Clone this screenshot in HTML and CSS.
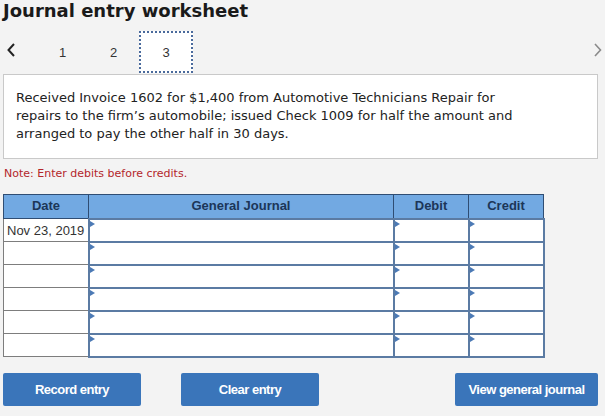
FILE: index.html
```html
<!DOCTYPE html>
<html lang="en">
<head>
    <meta charset="UTF-8">
    <meta name="viewport" content="width=device-width, initial-scale=1.0">
    <title>Journal entry worksheet</title>
    <link rel="stylesheet" href="styles.css">
</head>
<body>
    <h1 class="title">Journal entry worksheet</h1>

    <div class="pager">
        <a href="#" class="pager-arrow prev">
            <svg width="8" height="14" viewBox="0 0 8 14"><path d="M7 1 L1.5 7 L7 13" fill="none" stroke="#222" stroke-width="2"/></svg>
        </a>
        <a href="#" class="pager-tab">1</a>
        <a href="#" class="pager-tab">2</a>
        <a href="#" class="pager-tab active">3</a>
        <span class="pager-spacer"></span>
        <a href="#" class="pager-arrow next">
            <svg width="8" height="14" viewBox="0 0 8 14"><path d="M1 1 L6.5 7 L1 13" fill="none" stroke="#8a8a8a" stroke-width="1.6"/></svg>
        </a>
    </div>

    <div class="question">
        Received Invoice 1602 for $1,400 from Automotive Technicians Repair for<br>
        repairs to the firm’s automobile; issued Check 1009 for half the amount and<br>
        arranged to pay the other half in 30 days.
    </div>

    <div class="note">Note: Enter debits before credits.</div>

    <table class="journal">
        <thead>
            <tr>
                <th class="col-date">Date</th>
                <th class="col-account">General Journal</th>
                <th class="col-amount">Debit</th>
                <th class="col-amount">Credit</th>
            </tr>
        </thead>
        <tbody>
            <tr>
                <td class="date">Nov 23, 2019</td>
                <td class="entry"></td>
                <td class="entry"></td>
                <td class="entry"></td>
            </tr>
            <tr>
                <td class="date"></td>
                <td class="entry"></td>
                <td class="entry"></td>
                <td class="entry"></td>
            </tr>
            <tr>
                <td class="date"></td>
                <td class="entry"></td>
                <td class="entry"></td>
                <td class="entry"></td>
            </tr>
            <tr>
                <td class="date"></td>
                <td class="entry"></td>
                <td class="entry"></td>
                <td class="entry"></td>
            </tr>
            <tr>
                <td class="date"></td>
                <td class="entry"></td>
                <td class="entry"></td>
                <td class="entry"></td>
            </tr>
            <tr>
                <td class="date"></td>
                <td class="entry"></td>
                <td class="entry"></td>
                <td class="entry"></td>
            </tr>
        </tbody>
    </table>

    <div class="actions">
        <button class="btn">Record entry</button>
        <button class="btn">Clear entry</button>
        <span class="actions-spacer"></span>
        <button class="btn btn-wide">View general journal</button>
    </div>
</body>
</html>
```

FILE: styles.css
```css
* {
    margin: 0;
    padding: 0;
    box-sizing: border-box;
}

body {
    font-family: "DejaVu Sans", Verdana, sans-serif;
    background: #f3f3f3;
    color: #222;
    padding: 0 7px 0 3px;
}

.title {
    font-size: 18px;
    font-weight: bold;
    line-height: 21px;
    color: #1a1a1a;
}

.pager {
    display: flex;
    align-items: center;
    height: 42px;
    margin-top: 10px;
}

.pager-arrow {
    display: flex;
    align-items: center;
    justify-content: center;
}

.pager-arrow.prev {
    width: 14px;
    margin-left: 1px;
    margin-right: 19px;
    margin-top: -4px;
}

.pager-arrow.next {
    width: 10px;
    margin-right: -5px;
    margin-top: -4px;
}

.pager-tab {
    width: 51px;
    height: 42px;
    display: flex;
    align-items: center;
    justify-content: center;
    font-family: "Liberation Sans", Arial, sans-serif;
    font-size: 13px;
    color: #333;
    text-decoration: none;
}

.pager-tab.active {
    width: 54px;
    background: #fff;
    border: 2px dotted #4a6a9c;
}

.pager-spacer {
    flex: 1;
}

.question {
    background: #fff;
    border: 1px solid #c9c9c9;
    margin-top: 1px;
    padding: 14px 12px 15px;
    font-size: 13px;
    line-height: 18px;
    color: #222;
    width: 595px;
}

.note {
    font-size: 11px;
    color: #b3262b;
    margin-top: 7px;
    line-height: 15px;
    padding-left: 1px;
}

.journal {
    border-collapse: collapse;
    margin-top: 13px;
    font-family: "Liberation Sans", Arial, sans-serif;
    font-size: 13px;
}

.journal th {
    background: #72a9e2;
    color: #1c3658;
    font-weight: bold;
    height: 24px;
    border: 1px solid #2f4d73;
    padding: 0 0 2px;
}

.col-date { width: 85px; }
.col-account { width: 305px; }
.col-amount { width: 75px; }

.journal td {
    height: 23px;
    padding: 0;
    background: #fff;
}

.journal td.date {
    border: 1px solid #7d7d7d;
    padding-left: 3px;
    color: #333;
    white-space: nowrap;
}

.journal td.entry {
    position: relative;
    border: 2px solid #5b7ba3;
}

.journal td.entry::before {
    content: "";
    position: absolute;
    top: 1px;
    left: 0;
    border-left: 5px solid #4c7ab5;
    border-top: 3px solid transparent;
    border-bottom: 3px solid transparent;
}

.actions {
    display: flex;
    margin-top: 15px;
    gap: 40px;
}

.actions-spacer {
    flex: 1;
}

.btn {
    width: 138px;
    height: 33px;
    background: #3a75ba;
    color: #fff;
    border: none;
    border-radius: 2px;
    font-family: "Liberation Sans", Arial, sans-serif;
    font-size: 13px;
    font-weight: bold;
    letter-spacing: -0.5px;
    cursor: pointer;
}

.btn-wide {
    width: 143px;
}
```
